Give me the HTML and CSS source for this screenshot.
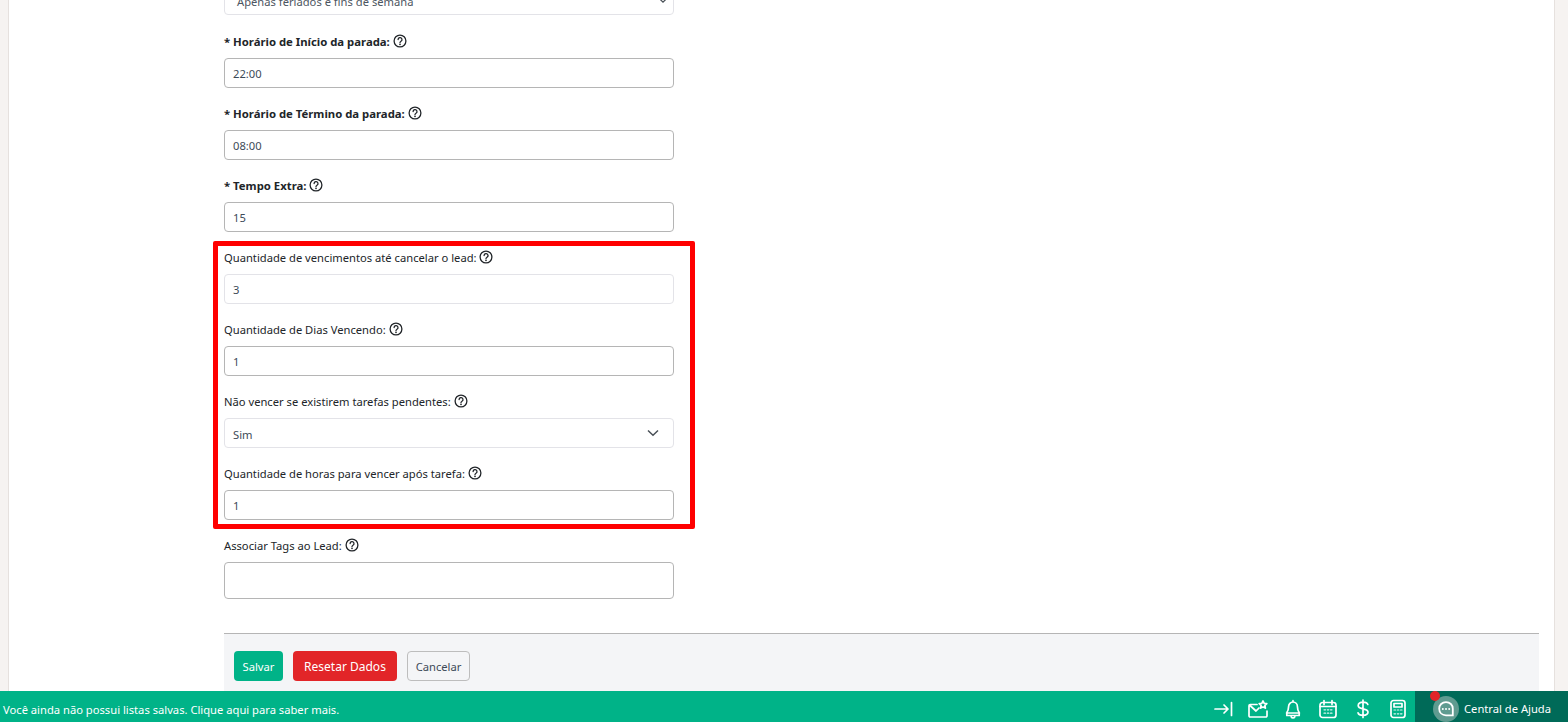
FILE: index.html
```html
<!DOCTYPE html>
<html lang="pt-BR">
<head>
<meta charset="utf-8">
<title>Configurações</title>
<link rel="stylesheet" href="styles.css">
</head>
<body>
<svg class="defs" width="0" height="0" aria-hidden="true">
  <symbol id="help" viewBox="0 0 14 14">
    <circle cx="7" cy="7" r="5.9" fill="none" stroke="currentColor" stroke-width="1.3"/>
    <path d="M5.1 5.500a1.950 1.950 0 1 1 2.900 1.700c-.65.38-1 .7-1 1.400" fill="none" stroke="currentColor" stroke-width="1.3" stroke-linecap="round"/>
    <circle cx="7" cy="10.300" r=".85" fill="currentColor"/>
  </symbol>
</svg>
<main class="panel">
  <div class="form">
    <div class="field first">
      <div class="control muted select-control"><span class="value-grey">Apenas feriados e fins de semana</span>
        <svg class="chev-small" viewBox="0 0 12 8"><path d="M1.500 1.500 6 6l4.500-4.500" fill="none" stroke="currentColor" stroke-width="1.5"/></svg>
      </div>
    </div>
    <div class="field">
      <label class="label strong">* Horário de Início da parada: <svg class="help"><use href="#help"/></svg></label>
      <div class="control">22:00</div>
    </div>
    <div class="field">
      <label class="label strong">* Horário de Término da parada: <svg class="help"><use href="#help"/></svg></label>
      <div class="control">08:00</div>
    </div>
    <div class="field">
      <label class="label strong">* Tempo Extra: <svg class="help"><use href="#help"/></svg></label>
      <div class="control">15</div>
    </div>
    <div class="field">
      <label class="label">Quantidade de vencimentos até cancelar o lead: <svg class="help"><use href="#help"/></svg></label>
      <div class="control muted">3</div>
    </div>
    <div class="field">
      <label class="label">Quantidade de Dias Vencendo: <svg class="help"><use href="#help"/></svg></label>
      <div class="control">1</div>
    </div>
    <div class="field">
      <label class="label">Não vencer se existirem tarefas pendentes: <svg class="help"><use href="#help"/></svg></label>
      <div class="control muted select-control"><span class="select-value">Sim</span>
        <svg class="chev" viewBox="0 0 12 8"><path d="M1 1.500 6 6.200l5-4.700" fill="none" stroke="currentColor" stroke-width="1.5"/></svg>
      </div>
    </div>
    <div class="field">
      <label class="label">Quantidade de horas para vencer após tarefa: <svg class="help"><use href="#help"/></svg></label>
      <div class="control">1</div>
    </div>
    <div class="field">
      <label class="label">Associar Tags ao Lead: <svg class="help"><use href="#help"/></svg></label>
      <div class="control tall"></div>
    </div>
  </div>
  <div class="actions">
    <button class="btn btn-save">Salvar</button>
    <button class="btn btn-reset">Resetar Dados</button>
    <button class="btn btn-cancel">Cancelar</button>
  </div>
  <div class="highlight"></div>
</main>
<footer class="bar">
  <span class="bar-msg">Você ainda não possui listas salvas. Clique aqui para saber mais.</span>
  <div class="bar-icons">
    <svg class="ico" viewBox="0 0 20 20"><path d="M2 10h13M11 6l4 4-4 4M18.500 3.500v13"/></svg>
    <svg class="ico" viewBox="0 0 20 20"><path d="M9 5.500H2.200A1.200 1.200 0 0 0 1 6.700v10.100A1.200 1.200 0 0 0 2.200 18h15.600a1.200 1.200 0 0 0 1.200-1.200V12M2 6.500l6 5.500 3-3"/><path d="m15 2 1.200 2.300 2.600.4-1.900 1.800.5 2.600-2.400-1.200-2.400 1.200.5-2.600-1.900-1.800 2.600-.4z"/></svg>
    <svg class="ico" viewBox="0 0 20 20"><path d="M10 3a4.400 4.400 0 0 0-4.400 4.400c0 3.500-.9 5-2 6.600h12.800c-1.100-1.600-2-3.100-2-6.600A4.400 4.400 0 0 0 10 3zM3.800 14v2.500h12.400V14M8.200 17.800a2 2 0 0 0 3.600 0M10 1.700V3"/></svg>
    <svg class="ico" viewBox="0 0 20 20"><rect x="2" y="3.500" width="16" height="15" rx="2.500"/><path d="M2 7.500h16M6 1.500v4M14 1.500v4"/><path class="dots" d="M6 10.800h1.500M9.300 10.800h1.500M12.500 10.800H14M6 14.200h1.500M9.300 14.200h1.500M12.500 14.200H14"/></svg>
    <svg class="ico" viewBox="0 0 20 20"><path d="M14.800 5.500C14.300 3.900 12.400 3.200 10 3.200 7.400 3.200 5.200 4.300 5.200 6.400s2.200 2.900 4.800 3.400 5 1.100 5 3.300-2.300 3.300-5 3.300c-2.600 0-4.500-.8-5-2.600M10 1v17.500"/></svg>
    <svg class="ico" viewBox="0 0 20 20"><rect x="3" y="1.500" width="14" height="17" rx="2.500"/><rect x="6" y="4.500" width="8" height="3.500"/><path class="dots" d="M6 11h1.500M9.300 11h1.500M12.500 11H14M6 14.800h1.500M9.300 14.800h1.500M12.500 14.800H14"/></svg>
  </div>
  <div class="help-center">
    <span class="chat-circle">
      <svg class="chat" viewBox="0 0 20 20"><path d="M10 3.200c-3.900 0-6.800 2.700-6.800 6.500 0 3.900 2.900 6.600 6.800 6.600h6.800v-6.600c0-3.800-2.900-6.500-6.800-6.500z" fill="none" stroke="#fff" stroke-width="1.800"/><circle cx="6.800" cy="10" r="1" fill="#fff"/><circle cx="10" cy="10" r="1" fill="#fff"/><circle cx="13.200" cy="10" r="1" fill="#fff"/></svg>
      <span class="chat-dot"></span>
    </span>
    <span class="help-text">Central de Ajuda</span>
  </div>
</footer>
</body>
</html>
```
FILE: styles.css
```css
* { box-sizing: border-box; }
html, body { margin: 0; height: 722px; overflow: hidden; }
body {
  background: #f6f3f1;
  font-family: "Noto Sans", "Open Sans", sans-serif;
  font-size: 11.2px;
  color: #212529;
  padding: 0 13px 0 9px;
}
.defs { position: absolute; }
.panel {
  position: relative;
  height: 722px;
  background: #fff;
  border-left: 1px solid #e6e1de;
  border-right: 1px solid #e6e1de;
  margin-left: -1px;
  padding: 0 15px 0 215px;
  overflow: hidden;
}
.form { width: 450px; margin-top: -15px; }
.field { height: 72px; }
.first { height: 43px; }
.label {
  display: flex;
  align-items: center;
  height: 30px;
  padding-bottom: 4px;
  white-space: pre;
  color: #212529;
}
.strong { font-weight: 700; font-size: 11.33px; }
.help { width: 14px; height: 14px; color: #212529; flex: none; }
.control {
  height: 30px;
  border: 1px solid #b5b5b5;
  border-radius: 4px;
  padding: 0 8px;
  display: flex;
  align-items: center;
  color: #3d4a57;
  background: #fff;
}
.muted { border-color: #e3e3e8; }
.select-control { justify-content: space-between; padding-right: 14px; }
.select-value { padding-top: 2px; }
.value-grey { color: #4d5661; padding: 2px 0 0 4px; }
.chev { width: 12px; height: 8px; color: #495057; }
.chev-small { width: 10px; height: 7px; color: #495057; margin-right: -9px; }
.tall { height: 37px; }
.actions {
  position: absolute;
  left: 215px;
  right: 15px;
  top: 633px;
  height: 89px;
  background: #f4f5f7;
  border-top: 1px solid #b5b5b5;
  display: flex;
  align-items: flex-start;
  gap: 10px;
  padding: 17px 0 0 10px;
}
.btn {
  height: 30px;
  border-radius: 4px;
  border: 1px solid transparent;
  font-family: inherit;
  font-size: 11.2px;
  padding: 0;
  color: #fff;
  white-space: nowrap;
}
.btn-save { background: #00b388; width: 49px; }
.btn-reset { background: #e22528; width: 104px; font-size: 12px; }
.btn-cancel { background: transparent; border-color: #bdbdbd; color: #3d4a57; width: 63px; }
.highlight {
  position: absolute;
  left: 204px;
  top: 241px;
  width: 482px;
  height: 288px;
  border: 5px solid #ff0000;
  border-radius: 2px;
  pointer-events: none;
}
.bar {
  position: fixed;
  left: 0;
  right: 0;
  bottom: 0;
  height: 31px;
  background: #00b388;
  color: #fff;
  display: flex;
  align-items: center;
}
.bar-msg { padding-left: 3px; flex: 1; padding-top: 6px; }
.bar-icons { display: flex; align-items: center; gap: 15px; padding-right: 7px; padding-top: 5px; }
.ico {
  width: 20px;
  height: 20px;
  fill: none;
  stroke: #fff;
  stroke-width: 1.7;
  stroke-linecap: round;
  stroke-linejoin: round;
  flex: none;
}
.dots { stroke-width: 1.2; opacity: .85; }
.help-center {
  width: 153px;
  height: 31px;
  background: #006a58;
  display: flex;
  align-items: center;
  padding-left: 18px;
  gap: 5px;
  flex: none;
}
.chat-circle {
  position: relative;
  width: 26px;
  height: 26px;
  border-radius: 50%;
  background: #5f9b90;
  display: flex;
  align-items: center;
  justify-content: center;
  margin-top: 5px;
  flex: none;
}
.chat { width: 20px; height: 20px; }
.chat-dot {
  position: absolute;
  left: -3px;
  top: -5px;
  width: 10px;
  height: 10px;
  border-radius: 50%;
  background: #e22528;
}
.help-text { padding-top: 3px; white-space: nowrap; }
```
